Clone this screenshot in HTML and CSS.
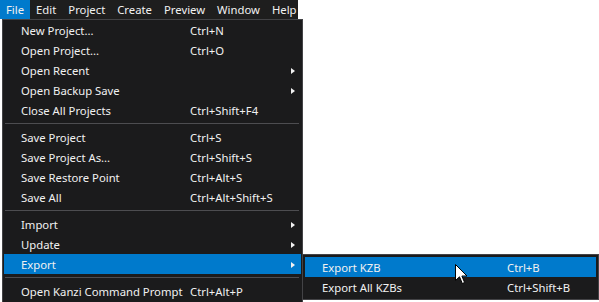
FILE: index.html
```html
<!DOCTYPE html>
<html lang="en">
<head>
    <meta charset="UTF-8">
    <title>File menu</title>
    <link rel="stylesheet" href="styles.css">
</head>
<body>
    <div class="menubar">
        <div class="menubar-item active">File</div>
        <div class="menubar-item">Edit</div>
        <div class="menubar-item">Project</div>
        <div class="menubar-item">Create</div>
        <div class="menubar-item">Preview</div>
        <div class="menubar-item">Window</div>
        <div class="menubar-item">Help</div>
    </div>

    <div class="menu file-menu">
        <div class="menu-row"><span class="label">New Project...</span><span class="shortcut">Ctrl+N</span></div>
        <div class="menu-row"><span class="label">Open Project...</span><span class="shortcut">Ctrl+O</span></div>
        <div class="menu-row"><span class="label">Open Recent</span><span class="shortcut"></span><span class="arrow"></span></div>
        <div class="menu-row"><span class="label">Open Backup Save</span><span class="shortcut"></span><span class="arrow"></span></div>
        <div class="menu-row"><span class="label">Close All Projects</span><span class="shortcut">Ctrl+Shift+F4</span></div>
        <div class="separator"></div>
        <div class="menu-row"><span class="label">Save Project</span><span class="shortcut">Ctrl+S</span></div>
        <div class="menu-row"><span class="label">Save Project As...</span><span class="shortcut">Ctrl+Shift+S</span></div>
        <div class="menu-row"><span class="label">Save Restore Point</span><span class="shortcut">Ctrl+Alt+S</span></div>
        <div class="menu-row"><span class="label">Save All</span><span class="shortcut">Ctrl+Alt+Shift+S</span></div>
        <div class="separator"></div>
        <div class="menu-row"><span class="label">Import</span><span class="shortcut"></span><span class="arrow"></span></div>
        <div class="menu-row"><span class="label">Update</span><span class="shortcut"></span><span class="arrow"></span></div>
        <div class="menu-row highlighted"><span class="label">Export</span><span class="shortcut"></span><span class="arrow"></span></div>
        <div class="separator"></div>
        <div class="menu-row"><span class="label">Open Kanzi Command Prompt</span><span class="shortcut">Ctrl+Alt+P</span></div>
    </div>

    <div class="menu submenu">
        <div class="menu-row highlighted"><span class="label">Export KZB</span><span class="shortcut">Ctrl+B</span></div>
        <div class="menu-row"><span class="label">Export All KZBs</span><span class="shortcut">Ctrl+Shift+B</span></div>
    </div>

    <svg class="cursor" width="13" height="21" viewBox="0 0 13 21">
        <path d="M0.5 0.5 L0.5 16.5 L4.5 12.8 L7.3 19.5 L9.6 18.5 L6.9 12 L12 12 Z" fill="#ffffff" stroke="#000000" stroke-width="1"/>
    </svg>
</body>
</html>
```

FILE: styles.css
```css
:root {
    --menu-bg: #1b1b1c;
    --bar-bg: #1e1e1e;
    --border-color: #434346;
    --separator-color: #4d4d50;
    --highlight: #007acc;
    --text-color: #f1f1f1;
}

* {
    margin: 0;
    padding: 0;
    box-sizing: border-box;
}

body {
    background-color: #ffffff;
    font-family: 'Noto Sans', 'Open Sans', sans-serif;
    font-size: 11.3px;
    color: var(--text-color);
    position: relative;
    width: 599px;
    height: 302px;
    overflow: hidden;
}

.menubar {
    display: flex;
    width: 298px;
    height: 19px;
    background-color: var(--bar-bg);
}

.menubar-item {
    padding: 0 6px;
    line-height: 19px;
}

.menubar-item.active {
    background-color: var(--highlight);
}

.menu {
    background-color: var(--menu-bg);
    border: 1px solid var(--border-color);
    padding: 0 1px 1px;
}

.file-menu {
    margin-left: 2px;
    width: 301px;
}

.menu-row {
    display: flex;
    align-items: center;
    height: 20px;
    padding-left: 17px;
    padding-top: 1px;
    white-space: nowrap;
}

.menu-row .label {
    width: 169px;
}

.menu-row .shortcut {
    flex: 1;
}

.menu-row.highlighted {
    background-color: var(--highlight);
}

.arrow {
    width: 0;
    height: 0;
    border-top: 3.5px solid transparent;
    border-bottom: 3.5px solid transparent;
    border-left: 4px solid var(--text-color);
    margin-right: 6px;
}

.separator {
    height: 1px;
    margin: 3px 2px 3px 1px;
    background-color: var(--separator-color);
}

.submenu {
    position: absolute;
    left: 302px;
    top: 254px;
    width: 297px;
    padding: 2px;
}

.submenu .label {
    width: 185px;
}

.cursor {
    position: absolute;
    left: 455px;
    top: 264px;
}
```
